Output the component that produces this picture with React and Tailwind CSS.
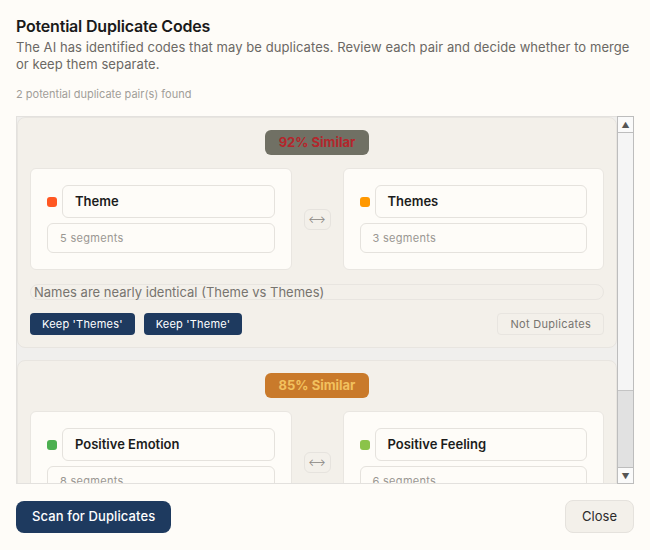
import React from 'react'

const pairs = [
  {
    score: 92,
    badge: 'bg-[#707064] text-[#b4262c]',
    a: { name: 'Theme', count: 5, color: 'bg-[#ff5722]' },
    b: { name: 'Themes', count: 3, color: 'bg-[#ff9800]' },
    reason: 'Names are nearly identical (Theme vs Themes)',
  },
  {
    score: 85,
    badge: 'bg-[#c97a2b] text-[#f2c15e]',
    a: { name: 'Positive Emotion', count: 8, color: 'bg-[#4caf50]' },
    b: { name: 'Positive Feeling', count: 6, color: 'bg-[#8bc34a]' },
    reason: 'Similar meaning (Positive Emotion vs Positive Feeling)',
  },
]

const CodeCard = ({ code }) => (
  <div className="flex-1 bg-[#fefcf8] border border-[#e9e6e1] rounded-md p-4">
    <div className="flex items-center gap-[5px]">
      <span className={`w-[10px] h-[10px] rounded-[3px] shrink-0 ${code.color}`} />
      <div className="flex-1 h-[33px] flex items-center px-3 border border-[#e5e2dd] rounded-md bg-[#fefcf8] text-[13px] font-semibold text-[#1c1c1c]">
        {code.name}
      </div>
    </div>
    <div className="mt-[5px] h-[30px] flex items-center px-3 border border-[#e5e2dd] rounded-md text-[11px] text-[#9a9792] tracking-[0.3px]">
      {code.count} segments
    </div>
  </div>
)

const PairCard = ({ pair }) => (
  <div className="shrink-0 bg-[#f3f0ea] border border-[#e8e5e0] rounded-lg p-3">
    <div className="flex justify-center">
      <span className={`h-[25px] px-[14px] flex items-center rounded-md text-[13px] font-bold ${pair.badge}`}>
        {pair.score}% Similar
      </span>
    </div>
    <div className="mt-[13px] flex items-center gap-[12px]">
      <CodeCard code={pair.a} />
      <div className="w-[27px] h-[21px] flex items-center justify-center border border-[#e6e3de] rounded-md text-[10px] text-[#8a8782] leading-none">
        ⟷
      </div>
      <CodeCard code={pair.b} />
    </div>
    <div className="mt-[14px] h-4 flex items-center px-[3px] border border-[#e8e5e0] rounded-full text-[13px] text-[#77746f] leading-4">
      {pair.reason}
    </div>
    <div className="mt-[13px] flex items-center gap-[9px]">
      <button className="h-[22px] px-3 rounded bg-[#1e3a5f] text-white text-[11px] tracking-[0.2px]">
        Keep '{pair.b.name}'
      </button>
      <button className="h-[22px] px-3 rounded bg-[#1e3a5f] text-white text-[11px] tracking-[0.2px]">
        Keep '{pair.a.name}'
      </button>
      <button className="ml-auto h-[22px] px-3 rounded border border-[#e8e5e0] text-[11px] text-[#77746f] tracking-[0.3px]">
        Not Duplicates
      </button>
    </div>
  </div>
)

const Scrollbar = () => (
  <div className="w-[17px] shrink-0 flex flex-col border border-[#bdbdbd] bg-[#f7f7f7]">
    <div className="h-4 flex items-center justify-center border-b border-[#bdbdbd] bg-[#fafafa] text-[8px] text-[#555] leading-none">
      ▲
    </div>
    <div className="flex-1 bg-[#f5f5f5] border-b border-[#c4c4c4]" />
    <div className="h-[76px] bg-[#e1e1e1]" />
    <div className="h-4 flex items-center justify-center border-t border-[#bdbdbd] bg-[#fafafa] text-[8px] text-[#555] leading-none">
      ▼
    </div>
  </div>
)

export default function App() {
  return (
    <div
      className="w-[650px] h-[550px] bg-[#fefcf8] px-4 pt-4 flex flex-col"
      style={{ fontFamily: 'Inter, "Noto Sans", sans-serif' }}
    >
      <h1 className="text-[16px] leading-5 font-semibold text-[#1a1a1a] tracking-[-0.2px]">Potential Duplicate Codes</h1>
      <p className="mt-[3px] text-[13px] leading-[17px] text-[#6b6864] tracking-[0.07px]">
        The AI has identified codes that may be duplicates. Review each pair and decide whether to merge or keep them separate.
      </p>
      <p className="mt-[14px] text-[11px] leading-[14px] text-[#a19e99]">2 potential duplicate pair(s) found</p>

      <div className="mt-[15px] h-[368px] flex bg-[#f0efed]">
        <div className="flex-1 overflow-hidden border-l border-t border-b border-[#e3e1de] flex flex-col gap-3">
          {pairs.map((p) => (
            <PairCard key={p.score} pair={p} />
          ))}
        </div>
        <Scrollbar />
      </div>

      <div className="mt-4 flex items-center justify-between">
        <button className="h-8 px-4 rounded-lg bg-[#1e3a5f] text-white text-[13px] font-medium tracking-[0.1px]">
          Scan for Duplicates
        </button>
        <button className="h-[33px] px-4 rounded-lg bg-[#f3f0ea] border border-[#e5e2dd] text-[13px] text-[#2a2a2a]">
          Close
        </button>
      </div>
    </div>
  )
}
